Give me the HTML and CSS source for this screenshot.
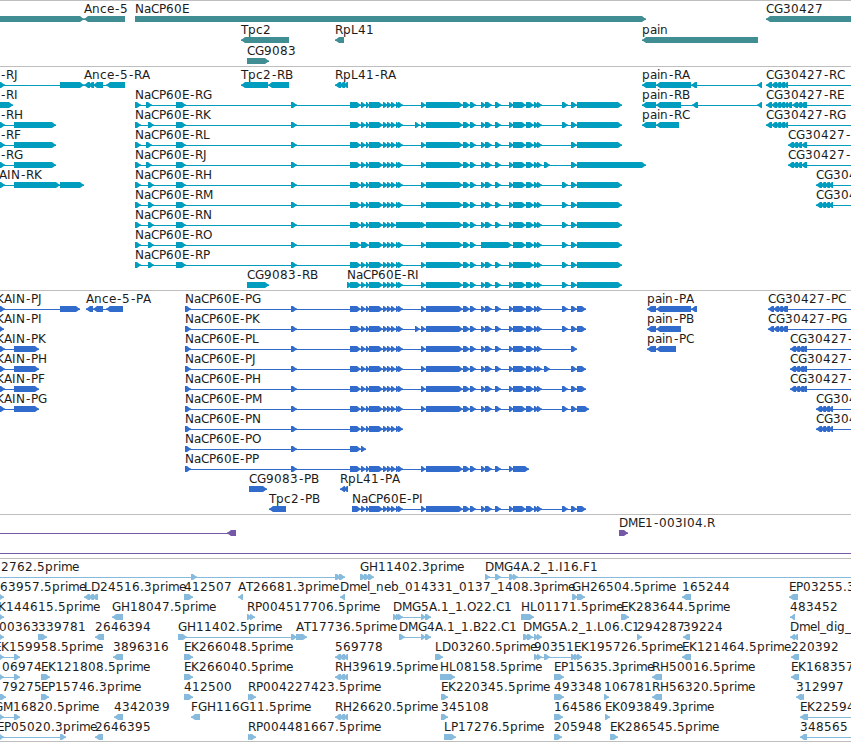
FILE: index.html
```
<!DOCTYPE html>
<html lang="en">
<head>
  <meta charset="UTF-8">
  <meta name="viewport" content="width=device-width, initial-scale=1.0">
  <title>Genome Browser</title>
  <link rel="stylesheet" href="styles.css">
</head>
<body>
  <main class="browser">
    <section class="track genes"><svg id="genes"></svg></section>
    <section class="track transcripts"><svg id="transcripts"></svg></section>
    <section class="track proteins"><svg id="proteins"></svg></section>
    <section class="track bacs"><svg id="bacs"></svg></section>
    <section class="track ests"><svg id="ests"></svg></section>
  </main>
  <script src="tracks.js"></script>
</body>
</html>
```
FILE: styles.css
```
/* Global */
body {
  margin: 0;
  background: #ffffff;
  color: #000000;
  font-family: "DejaVu Sans", sans-serif;
  overflow: hidden;
}

.browser {
  display: flex;
  flex-direction: column;
  width: 851px;
  border-bottom: 1px solid #bebebe;
}

/* --- Tracks --- */
.track {
  box-sizing: border-box;
  border-top: 1px solid #bebebe;
}

.track svg {
  display: block;
  width: 100%;
  height: 100%;
  overflow: hidden;
}

.track text {
  fill: #1c1c1c;
  font-size: 12px;
}

.genes { height: 66px; color: #408e94; }
.transcripts { height: 224px; color: #009dbf; }
.proteins { height: 224px; color: #316ccc; }
.bacs { height: 44px; color: #7658a8; }
.ests { height: 183px; color: #87bbdd; }

.exon,
.intron {
  fill: currentColor;
}
```
FILE: tracks.js
```
const SVG_NS = 'http://www.w3.org/2000/svg';
const measure = document.createElement('canvas').getContext('2d');
measure.font = '12px "DejaVu Sans"';

// advances that differ from the rounded glyph width
const ADVANCE = { '-': 6, E: 7, m: 11 };

// feature: row, label, strand, exons [start, end], optional label x
const f = (row, label, strand, exons, labelX) => ({ row, label, strand, exons, labelX });

function add(svg, name, attrs) {
  const el = document.createElementNS(SVG_NS, name);
  for (const key in attrs) el.setAttribute(key, attrs[key]);
  svg.appendChild(el);
  return el;
}

// whole-pixel advance for every glyph
function glyphPositions(label, x) {
  return [...label].map(ch => {
    // the hyphen sits in the middle of its wider cell
    const pos = ch === '-' ? x + 1 : x;
    x += ADVANCE[ch] || Math.round(measure.measureText(ch).width);
    return pos;
  }).join(' ');
}

function drawExon(svg, [a, b], strand, y) {
  const tip = Math.min(5, b - a);
  const from = strand === '+' ? a : b;
  const to = strand === '+' ? b : a;
  const s = strand === '+' ? -1 : 1;
  const points = [
    [from, y],
    [to + s * (tip - 1), y],
    [to + s * 1.5, y + 2],
    [to, y + 2.5],
    [to, y + 3.5],
    [to + s * 1.5, y + 4.2],
    [to + s * (tip - 1), y + 6],
    [from, y + 6]
  ];
  add(svg, 'polygon', { class: 'exon', points: points.join(' ') });
}

function drawTrack(id, features, pitch) {
  const svg = document.getElementById(id);
  features.forEach(({ row, label, strand, exons, labelX }) => {
    const top = row * pitch;
    const start = exons[0][0];
    const end = exons[exons.length - 1][1];
    add(svg, 'rect', { class: 'intron', x: start, y: top + 18, width: end - start, height: 1 });
    exons.forEach(e => drawExon(svg, e, strand, top + 15));
    if (label) {
      add(svg, 'text', { x: glyphPositions(label, labelX ?? start), y: top + 12 }).textContent = label;
    }
  });
}

// --- Genes ---
drawTrack('genes', [
  f(0, '', '+', [[-20, 84]]),
  f(0, 'Ance-5', '-', [[84, 125]]),
  f(0, 'NaCP60E', '+', [[135, 646]]),
  f(0, 'CG30427', '-', [[766, 900]]),
  f(1, 'Tpc2', '-', [[241, 289]]),
  f(1, 'RpL41', '-', [[335, 344]]),
  f(1, 'pain', '-', [[642, 758]]),
  f(2, 'CG9083', '+', [[247, 269]])
], 21);

// --- Exon groups shared by the NaCP60E isoforms ---
const A = [[350, 361], [361, 366]];
const B = [[366, 370], [369, 383]];
const C = [[383, 388], [387, 392], [391, 396]];
const D = [[396, 400], [398, 403]];
const E = [[421, 426], [426, 463], [463, 470], [470, 476]];
const F = [[481, 486], [485, 492], [495, 501]];
const G = [[509, 514], [513, 526]];
const H = [[526, 534], [534, 539], [537, 542]];
const mid = [291, 297];
const extra = [415, 420];
const e544 = [544, 550];
const e562 = [562, 568];
const e571 = [571, 577];
const last = [577, 622];
const body = [...A, ...B, ...C, ...D, ...E, ...F, ...G, ...H];
const withExtra = [...A, ...B, ...C, ...D, extra, ...E, ...F, ...G, ...H];
const head1 = [[135, 141], [146, 152], [176, 186], mid];
const head2 = [[135, 141], [148, 154], [176, 186], mid];
const cds = [[185, 191], mid];

const cgShort = x => [[x, x + 6], [x + 4, x + 10], [x + 8, x + 14], [x + 12, x + 17]];
const cgLong = x => [[x, x + 6], [x + 5, x + 11], [x + 9, x + 15], [x + 13, x + 19], [x + 17, 788]];
const cg788 = x => [[x, x + 6], [x + 4, x + 10], [x + 8, x + 14], [801, 807]];
const off = [900, 910];

// --- Transcripts ---
drawTrack('transcripts', [
  f(0, '-RJ', '+', [[-10, 5], [60, 84]], 0),
  f(1, '-RI', '+', [[-10, 13]], 0),
  f(2, '-RH', '+', [[-10, 5], [14, 56]], 0),
  f(3, '-RF', '+', [[-10, 5], [14, 56]], 0),
  f(4, '-RG', '+', [[-10, 5], [14, 56]], 0),
  f(5, 'AIN-RK', '+', [[-10, 5], [14, 60], [60, 84]], -1),
  f(0, 'Ance-5-RA', '-', [[84, 90], [88, 94], [93, 103], [106, 125]]),
  f(0, 'Tpc2-RB', '-', [[241, 268], [268, 289]]),
  f(0, 'RpL41-RA', '-', [[335, 341], [339, 345], [343, 348]]),
  f(1, 'NaCP60E-RG', '+', [...head1, ...body, e562, e571, last]),
  f(2, 'NaCP60E-RK', '+', [...head2, ...withExtra, e562, e571, last]),
  f(3, 'NaCP60E-RL', '+', [...head1, ...body, e571, last]),
  f(4, 'NaCP60E-RJ', '+', [...head1, ...body, e544, e571, [577, 646]]),
  f(5, 'NaCP60E-RH', '+', [...head2, ...body, e562, e571, last]),
  f(6, 'NaCP60E-RM', '+', [...head2, ...body, e562, e571, last]),
  f(7, 'NaCP60E-RN', '+', [...head2, ...A, ...B, ...C, [396, 424], ...E, ...F, ...G, ...H, e562, e571, last]),
  f(8, 'NaCP60E-RO', '+', [...head2, [350, 361], [361, 369], [369, 383], ...C, ...D, ...E, [481, 512], [513, 526], ...H, e562, e571, last]),
  f(9, 'NaCP60E-RP', '+', [...head2, ...body, [513, 532], e562, e571, last]),
  f(10, 'CG9083-RB', '+', [[247, 269]]),
  f(10, 'NaCP60E-RI', '+', [[347, 352], ...body, e562, e571, last]),
  f(0, 'pain-RA', '-', [[642, 656], [656, 691], [691, 697], [757, 762]]),
  f(1, 'pain-RB', '-', [[642, 656], [656, 681], [692, 698], [757, 762]]),
  f(2, 'pain-RC', '-', [[642, 656], [656, 679]]),
  f(0, 'CG30427-RC', '-', [...cgLong(766), off]),
  f(1, 'CG30427-RE', '-', [...cgLong(766), [786, 792], ...cg788(792), off]),
  f(2, 'CG30427-RG', '-', [...cgLong(766), off]),
  f(3, 'CG30427-', '-', [...cg788(788), off]),
  f(4, 'CG30427-', '-', [...cg788(788), off]),
  f(5, 'CG304', '-', [...cgShort(816), off]),
  f(6, 'CG304', '-', [...cgShort(816), off])
], 20);

// --- Proteins ---
const stop = [577, 586];
drawTrack('proteins', [
  f(0, 'KAIN-PJ', '+', [[-10, 5], [60, 80]], -4),
  f(1, 'KAIN-PI', '+', [[-10, 4]], -4),
  f(2, 'KAIN-PK', '+', [[-10, 5], [14, 39]], -4),
  f(3, 'KAIN-PH', '+', [[-10, 5], [14, 39]], -4),
  f(4, 'KAIN-PF', '+', [[-10, 5], [14, 39]], -4),
  f(5, 'KAIN-PG', '+', [[-10, 5], [14, 39]], -4),
  f(0, 'Ance-5-PA', '-', [[86, 93], [93, 103], [106, 123]]),
  f(0, 'NaCP60E-PG', '+', [...cds, ...body, e562, e571, stop]),
  f(1, 'NaCP60E-PK', '+', [...cds, ...withExtra, e562, e571, stop]),
  f(2, 'NaCP60E-PL', '+', [...cds, ...body, e571]),
  f(3, 'NaCP60E-PJ', '+', [...cds, ...body, e544, e571, stop]),
  f(4, 'NaCP60E-PH', '+', [...cds, ...body, e562, e571, stop]),
  f(5, 'NaCP60E-PM', '+', [...cds, ...body, e562, e571, [577, 589]]),
  f(6, 'NaCP60E-PN', '+', [...cds, ...A, ...B, ...C, ...D]),
  f(7, 'NaCP60E-PO', '+', [...cds, ...A]),
  f(8, 'NaCP60E-PP', '+', [...cds, ...A, ...B, ...C, ...D, ...E, ...F, [509, 514], [513, 529]]),
  f(9, 'CG9083-PB', '+', [[249, 267]]),
  f(9, 'RpL41-PA', '-', [[340, 345], [343, 348]]),
  f(10, 'Tpc2-PB', '-', [[269, 286]]),
  f(10, 'NaCP60E-PI', '+', [[352, 361], ...body.slice(1), e562, e571, stop]),
  f(0, 'pain-PA', '-', [[647, 656], [656, 691], [691, 697]]),
  f(1, 'pain-PB', '-', [[647, 656], [656, 681]]),
  f(2, 'pain-PC', '-', [[647, 656], [656, 676]]),
  f(0, 'CG30427-PC', '-', [...cgLong(768), off]),
  f(1, 'CG30427-PG', '-', [...cgLong(768), off]),
  f(2, 'CG30427-', '-', [...cg788(790), off]),
  f(3, 'CG30427-', '-', [...cg788(790), off]),
  f(4, 'CG30427-', '-', [...cg788(790), off]),
  f(5, 'CG304', '-', [...cgShort(816), off]),
  f(6, 'CG304', '-', [...cgShort(816), off])
], 20);

// --- BAC ends ---
drawTrack('bacs', [
  f(0, '', '-', [[-20, -10], [227, 236]]),
  f(0, 'DME1-003I04.R', '+', [[619, 628]]),
  f(1, '', '+', [[-20, -10], off])
], 20);

// --- ESTs ---
const rh = [[335, 341], [339, 345], [343, 348]];
const rp = [[248, 253], [250, 256]];
const edge = [-10, 4];
drawTrack('ests', [
  f(0, '2762.5prime', '+', [[-20, -10], [191, 197], [335, 341], [339, 345]], 1),
  f(0, 'GH11402.3prime', '+', [[360, 366], [364, 370], [368, 374]]),
  f(0, 'DMG4A.2_1.I16.F1', '+', [[485, 490], [495, 501], [509, 515], [513, 518], off]),

  f(1, '63957.5prime', '+', [edge], 0),
  f(1, 'LD24516.3prime', '-', [[84, 90], [88, 94], [92, 98]]),
  f(1, '412507', '+', [[184, 193]]),
  f(1, 'AT26681.3prime', '-', [[238, 243]]),
  f(1, 'Dmel_neb_014331_0137_1408.3prime', '-', [[340, 345]]),
  f(1, 'GH26504.5prime', '+', [[572, 578], [577, 585]]),
  f(1, '165244', '-', [[682, 691]]),
  f(1, 'EP03255.3', '-', [[789, 798]]),

  f(2, 'K144615.5prime', '+', [edge], -2),
  f(2, 'GH18047.5prime', '-', [[112, 123]]),
  f(2, 'RP004517706.5prime', '+', [[247, 252], [250, 255]]),
  f(2, 'DMG5A.1_1.O22.C1', '+', [[393, 398], [396, 401], [398, 403], [421, 426], [425, 431]]),
  f(2, 'HL01171.5prime', '+', [[521, 534]]),
  f(2, 'EK283644.5prime', '+', [[621, 629]]),
  f(2, '483452', '-', [[790, 795]]),

  f(3, '00363', '+', [edge], -1),
  f(3, '339781', '+', [[38, 47]]),
  f(3, '2646394', '-', [[95, 104]]),
  f(3, 'GH11402.5prime', '+', [[178, 187], [291, 297]]),
  f(3, 'AT17736.5prime', '+', [[296, 307]]),
  f(3, 'DMG4A.1_1.B22.C1', '+', [[399, 405], [421, 426], [425, 431]]),
  f(3, 'DMG5A.2_1.L06.C1', '+', [[523, 529], [527, 533], [534, 539], [537, 542]]),
  f(3, '294287', '+', [[637, 642]]),
  f(3, '39224', '-', [[683, 690]]),
  f(3, 'Dmel_dig_', '-', [[790, 795], [793, 798]]),

  f(4, 'EK159958.5prime', '+', [edge, [14, 20]], -6),
  f(4, '3896316', '-', [[113, 123]]),
  f(4, 'EK266048.5prime', '+', [[184, 193]]),
  f(4, '569778', '-', rh),
  f(4, 'LD03260.5prime', '+', [[435, 443]]),
  f(4, '90351', '+', [[534, 539], [537, 542], [544, 550], [571, 576], [574, 579], [577, 582]]),
  f(4, 'EK195726.5prime', '+', [[571, 576], [574, 579], [577, 582]], 574),
  f(4, 'EK121464.5prime', '-', [[682, 691]]),
  f(4, '220392', '-', [[791, 799]]),

  f(5, '06974', '+', [edge, [14, 20]], 2),
  f(5, 'EK121808.5prime', '+', [[41, 50]]),
  f(5, 'EK266040.5prime', '+', [[184, 193]]),
  f(5, 'RH39619.5prime', '-', rh),
  f(5, 'HL08158.5prime', '+', [[440, 455]]),
  f(5, 'EP15635.3prime', '+', [[554, 564]]),
  f(5, 'RH50016.5prime', '-', [[652, 662]]),
  f(5, 'EK168357', '-', [[791, 799]]),

  f(6, '79275', '+', [[-10, 6]], 2),
  f(6, 'EP15746.3prime', '+', [[41, 49]]),
  f(6, '412500', '+', [[184, 193]]),
  f(6, 'RP004227423.5prime', '+', rp),
  f(6, 'EK220345.5prime', '+', [[441, 448]]),
  f(6, '493348', '+', [[554, 564]]),
  f(6, '106781', '+', [[604, 609]]),
  f(6, 'RH56320.5prime', '-', [[652, 662]]),
  f(6, '312997', '-', [[796, 802], [799, 804]]),

  f(7, 'GM16820.5prime', '+', [edge, [14, 20]], -6),
  f(7, '4342039', '-', [[114, 123]]),
  f(7, 'FGH116G11.5prime', '-', [[191, 200]]),
  f(7, 'RH26620.5prime', '-', rh),
  f(7, '345108', '+', [[441, 448]]),
  f(7, '164586', '+', [[554, 563]]),
  f(7, 'EK093849.3prime', '+', [[605, 610]]),
  f(7, 'EK22594', '-', [[800, 808], off]),

  f(8, 'EP05020.3prime', '+', [edge, [60, 66]], -3),
  f(8, '2646395', '-', [[95, 103]]),
  f(8, 'RP004481667.5prime', '+', rp),
  f(8, 'LP17276.5prime', '+', [[444, 456]]),
  f(8, '205948', '+', [[554, 562]]),
  f(8, 'EK286545.5prime', '+', [[610, 618]]),
  f(8, '348565', '-', [[800, 807], off])
], 20);
```
